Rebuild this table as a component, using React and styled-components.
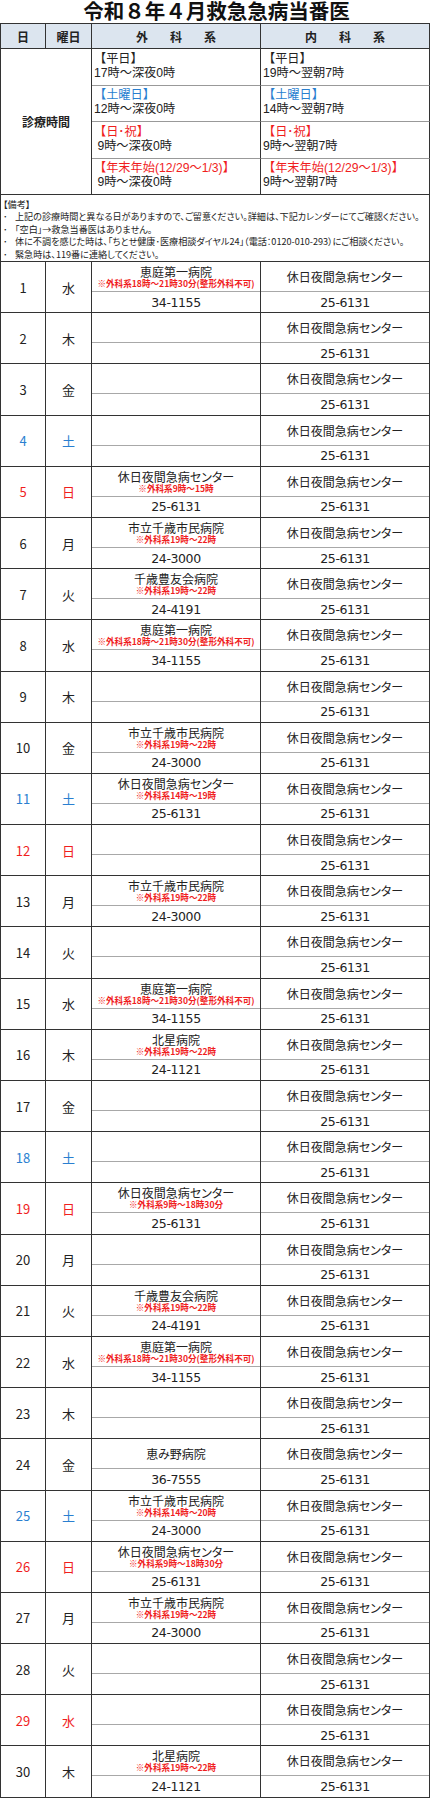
import styled, { createGlobalStyle } from "styled-components";

const GlobalStyle = createGlobalStyle`
  body {
    margin: 0;
    background: #fff;
    color: #222;
    font-family: "Noto Sans CJK JP", "Noto Sans", sans-serif;
  }
`;

const COLS = "45px 46px 169px 169px";
const RED = "#f01e1e";
const BLUE = "#2a7fd0";
const LATIN_FIRST = `"Liberation Sans", "Noto Sans CJK JP", sans-serif`;

const ENIWA = { name: "恵庭第一病院", note: "※外科系18時～21時30分(整形外科不可)", tel: "34-1155" };
const SHIMIN = { name: "市立千歳市民病院", note: "※外科系19時～22時", tel: "24-3000" };
const HOYU = { name: "千歳豊友会病院", note: "※外科系19時～22時", tel: "24-4191" };
const HOKUSEI = { name: "北星病院", note: "※外科系19時～22時", tel: "24-1121" };
const MEGUMINO = { name: "恵み野病院", tel: "36-7555" };
const center = (note) => ({ name: "休日夜間急病センター", note, tel: "25-6131" });

const days = [
  { d: 1, w: "水", s: ENIWA },
  { d: 2, w: "木" },
  { d: 3, w: "金" },
  { d: 4, w: "土", tone: "sat" },
  { d: 5, w: "日", tone: "sun", s: center("※外科系9時～15時") },
  { d: 6, w: "月", s: SHIMIN },
  { d: 7, w: "火", s: HOYU },
  { d: 8, w: "水", s: ENIWA },
  { d: 9, w: "木" },
  { d: 10, w: "金", s: SHIMIN },
  { d: 11, w: "土", tone: "sat", s: center("※外科系14時～19時") },
  { d: 12, w: "日", tone: "sun" },
  { d: 13, w: "月", s: SHIMIN },
  { d: 14, w: "火" },
  { d: 15, w: "水", s: ENIWA },
  { d: 16, w: "木", s: HOKUSEI },
  { d: 17, w: "金" },
  { d: 18, w: "土", tone: "sat" },
  { d: 19, w: "日", tone: "sun", s: center("※外科系9時～18時30分") },
  { d: 20, w: "月" },
  { d: 21, w: "火", s: HOYU },
  { d: 22, w: "水", s: ENIWA },
  { d: 23, w: "木" },
  { d: 24, w: "金", s: MEGUMINO },
  { d: 25, w: "土", tone: "sat", s: { ...SHIMIN, note: "※外科系14時～20時" } },
  { d: 26, w: "日", tone: "sun", s: center("※外科系9時～18時30分") },
  { d: 27, w: "月", s: SHIMIN },
  { d: 28, w: "火" },
  { d: 29, w: "水", tone: "sun" },
  { d: 30, w: "木", s: HOKUSEI },
];

const hours = [
  { label: "【平日】", surgery: "17時～深夜0時", internal: "19時～翌朝7時" },
  { label: "【土曜日】", tone: "sat", surgery: "12時～深夜0時", internal: "14時～翌朝7時" },
  { label: "【日･祝】", tone: "sun", surgery: " 9時～深夜0時", internal: "9時～翌朝7時" },
  { label: "【年末年始(12/29～1/3)】", tone: "sun", surgery: " 9時～深夜0時", internal: "9時～翌朝7時" },
];

const toneColor = (tone) => (tone === "sat" ? BLUE : tone === "sun" ? RED : "#222");

export default function App() {
  return (
    <>
      <GlobalStyle />
      <Page>
        <Title>令和８年４月救急急病当番医</Title>
        <Table>
          <HeadRow>
            <HeadCell>日</HeadCell>
            <HeadCell>曜日</HeadCell>
            <HeadCell $spaced>外　科　系</HeadCell>
            <HeadCell $spaced>内　科　系</HeadCell>
          </HeadRow>

          <HoursGrid>
            <HoursLabel>診療時間</HoursLabel>
            {hours.flatMap((h, i) => [
              <HoursCell key={i + "s"} $last={i === hours.length - 1}>
                <HoursTag $color={toneColor(h.tone)}>{h.label}</HoursTag>
                <HoursTime>{h.surgery}</HoursTime>
              </HoursCell>,
              <HoursCell key={i + "i"} $last={i === hours.length - 1}>
                <HoursTag $color={toneColor(h.tone)}>{h.label}</HoursTag>
                <HoursTime>{h.internal}</HoursTime>
              </HoursCell>,
            ])}
          </HoursGrid>

          <Remarks>
            <div>【備考】</div>
            <RemarkLine>
              <Dot>･</Dot>上記の診療時間と異なる日がありますので、ご留意ください。詳細は、下記カレンダーにてご確認ください。
            </RemarkLine>
            <RemarkLine>
              <Dot>･</Dot>「空白」→救急当番医はありません。
            </RemarkLine>
            <RemarkLine>
              <Dot>･</Dot>体に不調を感じた時は、「ちとせ健康･医療相談ダイヤル24」（電話：0120-010-293）にご相談ください。
            </RemarkLine>
            <RemarkLine>
              <Dot>･</Dot>緊急時は、119番に連絡してください。
            </RemarkLine>
          </Remarks>

          {days.map((day) => (
            <DayRow key={day.d}>
              <DayCell $color={toneColor(day.tone)}>{day.d}</DayCell>
              <DayCell $color={toneColor(day.tone)}>{day.w}</DayCell>
              <DutyCell>
                <DutyTop>
                  {day.s && <HospitalName>{day.s.name}</HospitalName>}
                  {day.s && day.s.note && <Note>{day.s.note}</Note>}
                </DutyTop>
                <DutyBottom>{day.s && day.s.tel}</DutyBottom>
              </DutyCell>
              <DutyCell>
                <DutyTop>
                  <HospitalName>休日夜間急病センター</HospitalName>
                </DutyTop>
                <DutyBottom>25-6131</DutyBottom>
              </DutyCell>
            </DayRow>
          ))}
        </Table>
      </Page>
    </>
  );
}

const Page = styled.div`
  width: 431px;
`;

const Title = styled.h1`
  margin: 0;
  height: 23px;
  line-height: 23px;
  font-family: ${LATIN_FIRST};
  font-size: 20.5px;
  font-weight: bold;
  text-align: center;
  color: #111;
  padding-left: 2px;
`;

const Table = styled.div`
  width: 430px;
  box-sizing: border-box;
  border-top: 1px solid #333;
  border-left: 1px solid #333;
`;

const HeadRow = styled.div`
  display: grid;
  grid-template-columns: ${COLS};
  height: 25px;
  background: #dce5ef;
`;

const HeadCell = styled.div`
  display: flex;
  align-items: center;
  justify-content: center;
  border-right: 1px solid #333;
  border-bottom: 1px solid #333;
  font-size: 12px;
  font-weight: bold;
  letter-spacing: ${(p) => (p.$spaced ? "5px" : "0")};
  padding-left: ${(p) => (p.$spaced ? "5px" : "0")};
`;

const HoursGrid = styled.div`
  display: grid;
  grid-template-columns: 91px 169px 169px;
  grid-template-rows: repeat(4, 36.5px);
`;

const HoursLabel = styled.div`
  grid-row: 1 / span 4;
  display: flex;
  align-items: center;
  justify-content: center;
  border-right: 1px solid #333;
  border-bottom: 1px solid #333;
  font-size: 12px;
  font-weight: bold;
`;

const HoursCell = styled.div`
  display: flex;
  flex-direction: column;
  justify-content: center;
  padding-left: 2px;
  border-right: 1px solid #333;
  border-bottom: 1px solid ${(p) => (p.$last ? "#333" : "#999")};
  font-family: ${LATIN_FIRST};
  font-size: 12.2px;
  line-height: 13.8px;
`;

const HoursTag = styled.div`
  color: ${(p) => p.$color};
`;

const HoursTime = styled.div`
  white-space: pre;
`;

const Remarks = styled.div`
  height: 67px;
  box-sizing: border-box;
  padding: 3px 2px 0;
  border-right: 1px solid #333;
  border-bottom: 1px solid #333;
  font-size: 9.1px;
  line-height: 12.4px;
  font-feature-settings: "palt";
  white-space: nowrap;
  overflow: hidden;
`;

const RemarkLine = styled.div`
  display: flex;
`;

const Dot = styled.span`
  width: 12px;
  flex: none;
`;

const DayRow = styled.div`
  display: grid;
  grid-template-columns: ${COLS};
  height: 51.2px;
`;

const DayCell = styled.div`
  display: flex;
  align-items: center;
  justify-content: center;
  border-right: 1px solid #333;
  border-bottom: 1px solid #333;
  font-size: 13px;
  color: ${(p) => p.$color};
`;

const DutyCell = styled.div`
  display: flex;
  flex-direction: column;
  border-right: 1px solid #333;
  border-bottom: 1px solid #333;
`;

const DutyTop = styled.div`
  height: 29px;
  display: flex;
  flex-direction: column;
  align-items: center;
  justify-content: center;
  border-bottom: 1px solid #a8a8a8;
`;

const DutyBottom = styled.div`
  flex: 1;
  display: flex;
  align-items: center;
  justify-content: center;
  font-size: 12.5px;
  font-family: "DejaVu Sans", "Noto Sans CJK JP", sans-serif;
  letter-spacing: -0.4px;
`;

const HospitalName = styled.div`
  font-size: 12px;
  line-height: 13px;
  font-feature-settings: "palt";
`;

const Note = styled.div`
  font-size: 8.6px;
  line-height: 10px;
  font-weight: bold;
  color: ${RED};
  white-space: nowrap;
`;
